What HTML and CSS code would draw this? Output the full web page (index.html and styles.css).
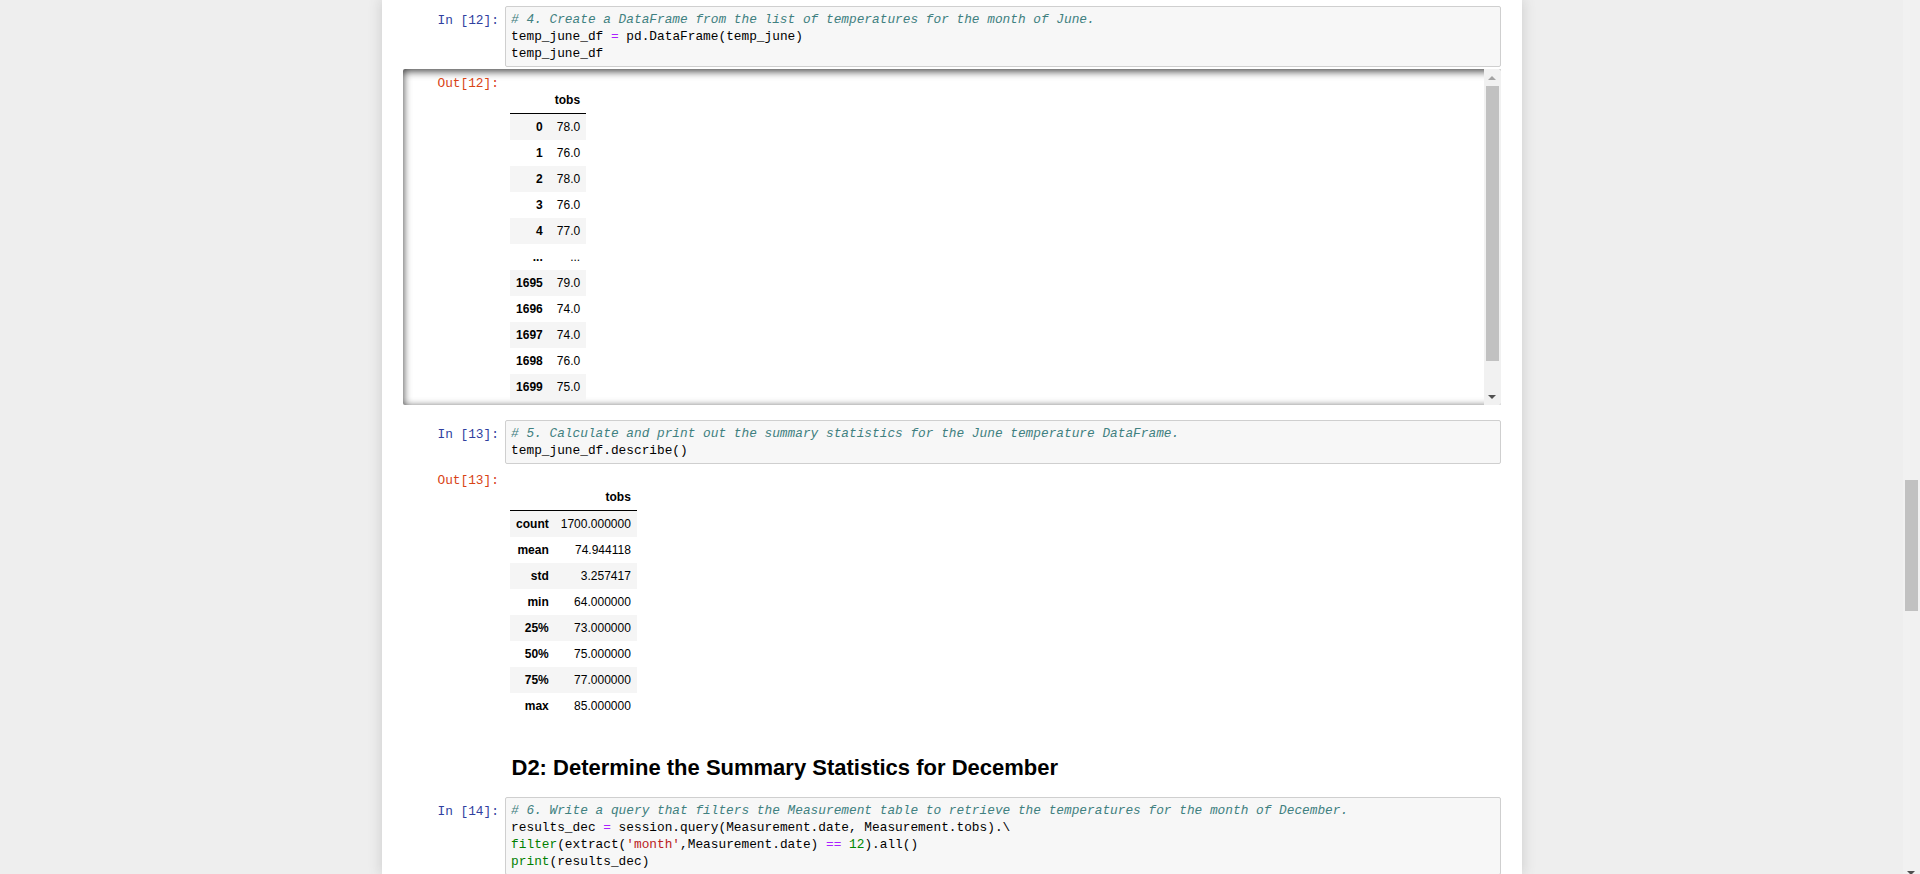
FILE: index.html
```html
<!DOCTYPE html>
<html lang="en">
<head>
<meta charset="utf-8">
<title>Notebook</title>
<link rel="stylesheet" href="styles.css">
</head>
<body>
<div class="page">
  <div class="nb-container">

    <div class="cell">
      <div class="input">
        <div class="prompt in-prompt">In&nbsp;[12]:</div>
        <div class="input-area">
          <div class="code">
            <pre class="line"><span class="c"># 4. Create a DataFrame from the list of temperatures for the month of June.</span></pre>
            <pre class="line">temp_june_df <span class="o">=</span> pd.DataFrame(temp_june)</pre>
            <pre class="line">temp_june_df</pre>
          </div>
        </div>
      </div>
      <div class="output-wrapper">
        <div class="output-scroll">
          <div class="scroll-content">
            <div class="output-area">
              <div class="prompt out-prompt">Out[12]:</div>
              <div class="output-subarea">
                <table class="dataframe">
                  <thead><tr><th></th><th>tobs</th></tr></thead>
                  <tbody>
                    <tr><th>0</th><td>78.0</td></tr>
                    <tr><th>1</th><td>76.0</td></tr>
                    <tr><th>2</th><td>78.0</td></tr>
                    <tr><th>3</th><td>76.0</td></tr>
                    <tr><th>4</th><td>77.0</td></tr>
                    <tr><th>...</th><td>...</td></tr>
                    <tr><th>1695</th><td>79.0</td></tr>
                    <tr><th>1696</th><td>74.0</td></tr>
                    <tr><th>1697</th><td>74.0</td></tr>
                    <tr><th>1698</th><td>76.0</td></tr>
                    <tr><th>1699</th><td>75.0</td></tr>
                  </tbody>
                </table>
              </div>
            </div>
          </div>
          <div class="vscroll">
            <div class="sb-btn"><span class="arrow-up"></span></div>
            <div class="sb-thumb"></div>
            <div class="sb-rest"></div>
            <div class="sb-btn"><span class="arrow-down"></span></div>
          </div>
        </div>
      </div>
    </div>

    <div class="cell">
      <div class="input">
        <div class="prompt in-prompt">In&nbsp;[13]:</div>
        <div class="input-area">
          <div class="code">
            <pre class="line"><span class="c"># 5. Calculate and print out the summary statistics for the June temperature DataFrame.</span></pre>
            <pre class="line">temp_june_df.describe()</pre>
          </div>
        </div>
      </div>
      <div class="output-wrapper">
        <div class="output-area">
          <div class="prompt out-prompt">Out[13]:</div>
          <div class="output-subarea">
            <table class="dataframe">
              <thead><tr><th></th><th>tobs</th></tr></thead>
              <tbody>
                <tr><th>count</th><td>1700.000000</td></tr>
                <tr><th>mean</th><td>74.944118</td></tr>
                <tr><th>std</th><td>3.257417</td></tr>
                <tr><th>min</th><td>64.000000</td></tr>
                <tr><th>25%</th><td>73.000000</td></tr>
                <tr><th>50%</th><td>75.000000</td></tr>
                <tr><th>75%</th><td>77.000000</td></tr>
                <tr><th>max</th><td>85.000000</td></tr>
              </tbody>
            </table>
          </div>
        </div>
      </div>
    </div>

    <div class="cell text-cell">
      <div class="prompt"></div>
      <div class="text-render">
        <h2>D2: Determine the Summary Statistics for December</h2>
      </div>
    </div>

    <div class="cell">
      <div class="input">
        <div class="prompt in-prompt">In&nbsp;[14]:</div>
        <div class="input-area">
          <div class="code">
            <pre class="line"><span class="c"># 6. Write a query that filters the Measurement table to retrieve the temperatures for the month of December.</span></pre>
            <pre class="line">results_dec <span class="o">=</span> session.query(Measurement.date, Measurement.tobs).\</pre>
            <pre class="line"><span class="b">filter</span>(extract(<span class="s">'month'</span>,Measurement.date) <span class="o">==</span> <span class="n">12</span>).all()</pre>
            <pre class="line"><span class="b">print</span>(results_dec)</pre>
          </div>
        </div>
      </div>
    </div>

  </div>
  <div class="page-scrollbar">
    <div class="page-thumb"></div>
    <span class="page-arrow"></span>
  </div>
</div>
</body>
</html>
```
FILE: styles.css
```css
* { box-sizing: border-box; }

html, body {
  margin: 0;
  padding: 0;
}

body {
  background: #eeeeee;
  height: 874px;
  overflow: hidden;
  font-family: "Liberation Sans", Arial, sans-serif;
  font-size: 13px;
  color: #000;
}

.page {
  height: 874px;
  overflow: hidden;
  display: flex;
  justify-content: center;
  padding-right: 17px;
}

.nb-container {
  width: 1140px;
  flex: none;
  padding: 0 15px;
  background: #fff;
  box-shadow: 0 0 12px 1px rgba(87, 87, 87, 0.2);
  min-height: 874px;
}

.cell {
  border: 1px solid transparent;
  padding: 5px;
}

.input,
.output-area,
.text-cell {
  display: flex;
}

.prompt {
  flex: none;
  width: 102px;
  padding: 5.6px;
  text-align: right;
  font-family: "Liberation Mono", "DejaVu Sans Mono", monospace;
  font-size: 12.8px;
  line-height: 17px;
  white-space: nowrap;
}

.in-prompt { color: #303f9f; }
.out-prompt { color: #d84315; }

.input-area {
  flex: 1;
  min-width: 0;
  border: 1px solid #cfcfcf;
  border-radius: 2px;
  background: #f7f7f7;
  padding: 4px 0;
}

.code {
  padding: 0 5.6px;
  font-family: "Liberation Mono", "DejaVu Sans Mono", monospace;
  font-size: 12.8px;
  line-height: 17px;
  color: #000;
  overflow: hidden;
}

.code .line {
  margin: 0;
  font: inherit;
  line-height: 17px;
  white-space: pre;
}

.code .c { color: #408080; font-style: italic; }
.code .o { color: #aa22ff; }
.code .b { color: #008000; }
.code .s { color: #ba2121; }
.code .n { color: #008800; }

.output-wrapper {
  margin: 2px 0 3px;
}

.output-scroll {
  height: 336px;
  display: flex;
  border-radius: 2px;
  box-shadow: inset 0 2px 8px rgba(0, 0, 0, 0.8);
  overflow: hidden;
}

.scroll-content {
  flex: 1;
  min-width: 0;
  overflow: hidden;
}

.output-subarea {
  flex: 1;
  min-width: 0;
  padding: 5.6px;
}

.dataframe {
  margin-top: 12px;
  border: none;
  border-collapse: collapse;
  border-spacing: 0;
  color: #000;
  font-family: "Liberation Sans", Arial, sans-serif;
  font-size: 12px;
}

.dataframe thead {
  border-bottom: 1px solid #000;
  vertical-align: bottom;
}

.dataframe th,
.dataframe td {
  text-align: right;
  vertical-align: middle;
  padding: 6px;
  line-height: 14px;
  white-space: normal;
  border: none;
}

.dataframe th { font-weight: bold; }

.dataframe tbody tr:nth-child(odd) { background: #f5f5f5; }

.vscroll {
  flex: none;
  width: 17px;
  display: flex;
  flex-direction: column;
  background: #f1f1f1;
}

.sb-btn {
  height: 17px;
  flex: none;
  display: flex;
  align-items: center;
  justify-content: center;
}

.sb-thumb {
  height: 275px;
  flex: none;
  margin: 0 2px;
  background: #c1c1c1;
}

.sb-rest { flex: 1; }

.arrow-up {
  width: 0;
  height: 0;
  border-left: 4px solid transparent;
  border-right: 4px solid transparent;
  border-bottom: 4px solid #a3a3a3;
}

.arrow-down {
  width: 0;
  height: 0;
  border-left: 4px solid transparent;
  border-right: 4px solid transparent;
  border-top: 4px solid #505050;
}

.text-render {
  flex: 1;
  padding: 7px 7px 6px;
}

.text-render h2 {
  margin: 11px 0 0;
  font-family: "Liberation Sans", Arial, sans-serif;
  font-size: 22px;
  line-height: 22px;
  font-weight: bold;
  color: #000;
}

.page-scrollbar {
  position: fixed;
  top: 0;
  right: 0;
  width: 17px;
  height: 874px;
  background: #f1f1f1;
}

.page-thumb {
  position: absolute;
  top: 480px;
  left: 2px;
  width: 13px;
  height: 131px;
  background: #c1c1c1;
}

.page-arrow {
  position: absolute;
  left: 4px;
  top: 871px;
  width: 0;
  height: 0;
  border-left: 4px solid transparent;
  border-right: 4px solid transparent;
  border-top: 4px solid #505050;
}
```
